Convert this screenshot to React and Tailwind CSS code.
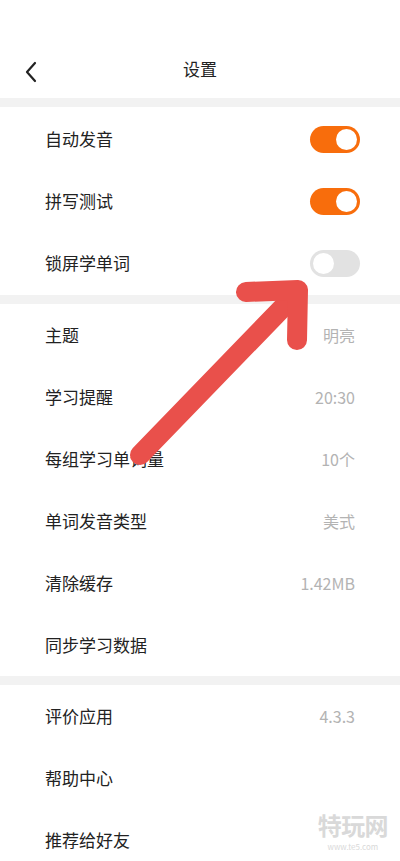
import React from "react";

const font = { fontFamily: '"Noto Sans CJK SC", "Noto Sans", sans-serif' };

function Toggle({ on }) {
  return (
    <div
      className={
        "w-[50px] h-[27px] rounded-full p-[3px] flex " +
        (on ? "bg-[#f86d0c] justify-end" : "bg-[#e2e2e2] justify-start")
      }
    >
      <div className="w-[21px] h-[21px] rounded-full bg-white" />
    </div>
  );
}

function Row({ label, value, toggle }) {
  return (
    <div className="h-[62px] flex items-center justify-between pl-[45px]">
      <div className="text-[17px] text-[#222]">{label}</div>
      {toggle !== undefined ? (
        <div className="pr-[40px]">
          <Toggle on={toggle} />
        </div>
      ) : (
        <div className="text-[16px] text-[#b3b3b3] pr-[45px]">{value}</div>
      )}
    </div>
  );
}

export default function App() {
  return (
    <div className="relative w-[400px] h-[861px] bg-white overflow-hidden" style={font}>
      <div className="h-[98px] flex items-end pb-[14px] relative">
        <div className="w-full flex items-center justify-center h-[30px]">
          <div className="text-[17px] text-[#222]">设置</div>
        </div>
        <svg className="absolute left-[22px] top-[60px]" width="18" height="24" viewBox="0 0 18 24">
          <path d="M13 3 L5 12 L13 21" fill="none" stroke="#222" strokeWidth="2.2" strokeLinecap="round" strokeLinejoin="round" />
        </svg>
      </div>
      <div className="h-[9px] bg-[#f2f2f2]" />
      <div className="pt-[1px]">
        <Row label="自动发音" toggle={true} />
        <Row label="拼写测试" toggle={true} />
        <Row label="锁屏学单词" toggle={false} />
      </div>
      <div className="h-[9px] bg-[#f2f2f2] mt-[1px]" />
      <div>
        <Row label="主题" value="明亮" />
        <Row label="学习提醒" value="20:30" />
        <Row label="每组学习单词量" value="10个" />
        <Row label="单词发音类型" value="美式" />
        <Row label="清除缓存" value="1.42MB" />
        <Row label="同步学习数据" />
      </div>
      <div className="h-[9px] bg-[#f2f2f2]" />
      <div>
        <Row label="评价应用" value="4.3.3" />
        <Row label="帮助中心" />
        <Row label="推荐给好友" />
      </div>

      <svg className="absolute left-0 top-0 pointer-events-none" width="400" height="861">
        <g fill="none" stroke="#e9504b" strokeWidth="20" strokeLinecap="round" strokeLinejoin="round">
          <path d="M140 455 L292 298" />
          <path d="M246 292 L298 290 L297 340" />
        </g>
      </svg>

      <div className="absolute right-[12px] top-[812px] flex flex-col items-center text-[#d9d9d9]">
        <div className="text-[24px] leading-[26px] font-bold tracking-tight">特玩网</div>
        <div className="text-[8px] leading-[10px] mt-[4px]">www.te5.com</div>
      </div>
    </div>
  );
}
